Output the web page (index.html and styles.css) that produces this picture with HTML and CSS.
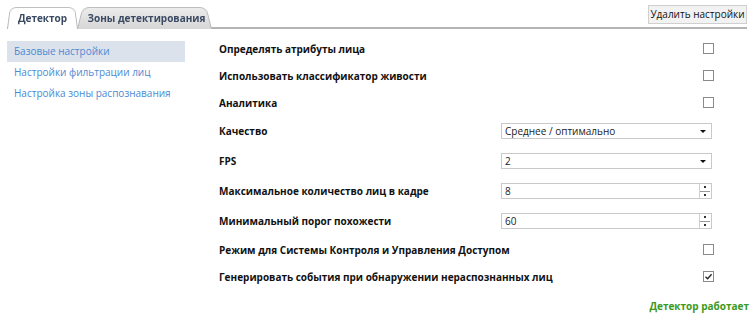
FILE: index.html
```html
<!DOCTYPE html>
<html lang="ru">
<head>
<meta charset="utf-8">
<link rel="stylesheet" href="styles.css">
</head>
<body>
<div class="page">
  <div class="topbar">
    <div class="tabs">
      <div class="tab active"><span>Детектор</span></div>
      <div class="tab"><span>Зоны детектирования</span></div>
    </div>
    <button class="btn">Удалить настройки</button>
  </div>
  <div class="content">
    <nav class="nav">
      <a class="nav-item selected">Базовые настройки</a>
      <a class="nav-item">Настройки фильтрации лиц</a>
      <a class="nav-item">Настройка зоны распознавания</a>
    </nav>
    <div class="main">
      <div class="row chk-row"><span class="label">Определять атрибуты лица</span><span class="cb"></span></div>
      <div class="row chk-row"><span class="label">Использовать классификатор живости</span><span class="cb"></span></div>
      <div class="row chk-row"><span class="label">Аналитика</span><span class="cb"></span></div>
      <div class="row ctl-row"><span class="label">Качество</span>
        <div class="select"><span>Среднее / оптимально</span><span class="arrow"></span></div></div>
      <div class="row ctl-row"><span class="label">FPS</span>
        <div class="select"><span>2</span><span class="arrow"></span></div></div>
      <div class="row ctl-row"><span class="label">Максимальное количество лиц в кадре</span>
        <div class="spin"><span>8</span><span class="spinner"><i class="up"></i><i class="down"></i></span></div></div>
      <div class="row ctl-row"><span class="label">Минимальный порог похожести</span>
        <div class="spin"><span>60</span><span class="spinner"><i class="up"></i><i class="down"></i></span></div></div>
      <div class="row chk-row"><span class="label">Режим для Системы Контроля и Управления Доступом</span><span class="cb"></span></div>
      <div class="row chk-row"><span class="label">Генерировать события при обнаружении нераспознанных лиц</span><span class="cb checked"><svg width="9" height="9" viewBox="0 0 9 9"><path d="M1.5 4.8 L3.6 6.8 L7.6 2.2" fill="none" stroke="#222" stroke-width="1.3"/></svg></span></div>
      <div class="status">Детектор работает</div>
    </div>
  </div>
</div>
</body>
</html>
```
FILE: styles.css
```css
* { box-sizing: border-box; }
html, body { margin: 0; padding: 0; background: #fff; }
body { font-family: "Open Sans", "Noto Sans", sans-serif; font-size: 10px; color: #111; white-space: nowrap; }
.page { width: 751px; height: 313px; padding: 0 4px 0 7px; }
.topbar { display: flex; justify-content: space-between; align-items: flex-start; height: 29px; border-bottom: 2px solid #b4b4b4; position: relative; }
.tabs { display: flex; align-self: flex-end; height: 24px; margin-bottom: -2px; }
.tab { position: relative; z-index: 0; display: flex; align-items: center; justify-content: center; font-weight: 700; color: #3b4a63; font-size: 10px; }
.tab span { position: relative; top: 1px; }
.tab::before { content: ""; position: absolute; inset: 0; z-index: -1; border: 1px solid #b9b9b9; border-bottom: none; border-radius: 7px 7px 0 0; background: linear-gradient(#ececec, #d6d6d6); transform: perspective(14px) rotateX(3deg); transform-origin: bottom; }
.tab.active { width: 71px; z-index: 2; }
.tab.active::before { background: #fff; }
.tab:not(.active) { width: 135px; margin-left: -1px; z-index: 1; padding-left: 4px; }
.btn { margin-top: 5px; height: 19px; width: 99px; padding: 0; border: 1px solid #cfcfcf; background: #f2f2f2; font-family: inherit; font-size: 10px; color: #111; line-height: 17px; white-space: nowrap; }
.content { display: flex; }
.nav { width: 178px; margin-top: 12px; display: flex; flex-direction: column; }
.nav-item { height: 21px; line-height: 21px; padding-left: 7px; color: #4b8ad2; font-size: 10px; }
.nav-item.selected { background: #dbe2eb; }
.main { margin-left: 34px; width: 528px; padding-top: 6px; display: flex; flex-direction: column; }
.row { display: flex; align-items: center; justify-content: space-between; padding-right: 33px; }
.chk-row { height: 27px; }
.ctl-row { height: 30px; }
.label { font-weight: 700; font-size: 10px; color: #111; }
.cb { width: 11px; height: 11px; border: 1px solid #8a8a8a; background: #fff; display: flex; align-items: center; justify-content: center; }
.select, .spin { width: 211px; height: 16px; border: 1px solid #c9c9c9; display: flex; align-items: center; justify-content: space-between; padding-left: 3px; margin-right: 2px; font-size: 10px; color: #222; }
.arrow { width: 0; height: 0; border-left: 3px solid transparent; border-right: 3px solid transparent; border-top: 3px solid #111; margin-right: 5px; }
.spinner { width: 11px; height: 14px; display: flex; flex-direction: column; border-left: 1px solid #d0d0d0; margin-right: 1px; }
.spinner i { flex: 1; display: flex; align-items: center; justify-content: center; }
.spinner i.up { border-bottom: 1px solid #9a9a9a; }
.spinner i::after { content: ""; width: 2px; height: 2px; background: #333; }
.status { align-self: flex-end; margin-top: 9px; margin-right: -2px; color: #3c9a1c; font-weight: 700; font-size: 10px; }
```
